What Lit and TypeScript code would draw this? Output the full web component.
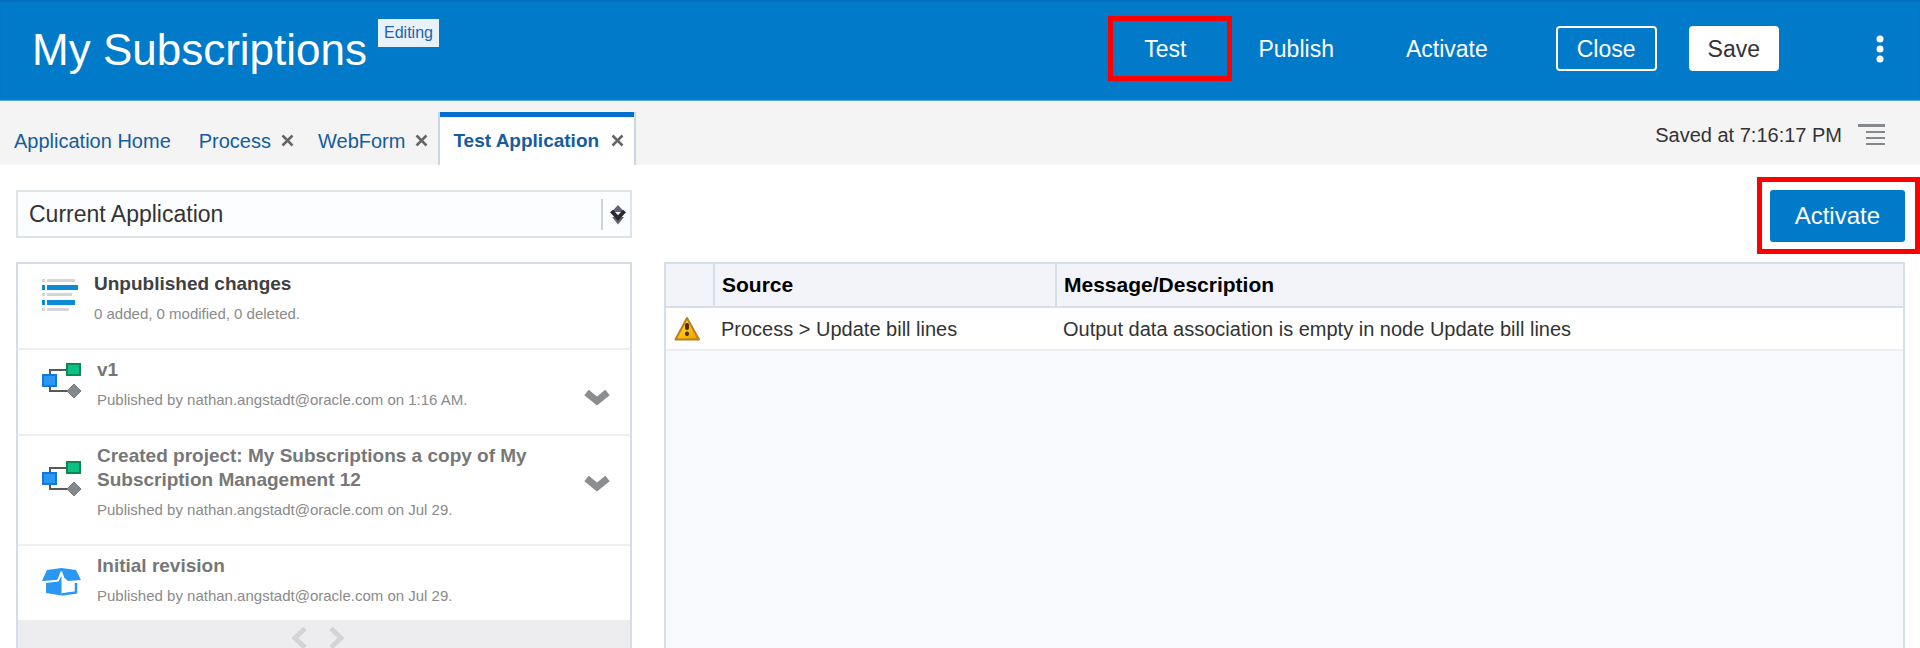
import { LitElement, html, css, svg } from "lit";
import { customElement, state } from "lit/decorators.js";

type Kind = "changes" | "process" | "box";

interface Revision {
  kind: Kind;
  title: string;
  detail: string;
  expandable: boolean;
}

interface Tab {
  label: string;
  closable: boolean;
}

const REVISIONS: Revision[] = [
  { kind: "changes", title: "Unpublished changes", detail: "0 added, 0 modified, 0 deleted.", expandable: false },
  { kind: "process", title: "v1", detail: "Published by nathan.angstadt@oracle.com on 1:16 AM.", expandable: true },
  {
    kind: "process",
    title: "Created project: My Subscriptions a copy of My Subscription Management 12",
    detail: "Published by nathan.angstadt@oracle.com on Jul 29.",
    expandable: true,
  },
  { kind: "box", title: "Initial revision", detail: "Published by nathan.angstadt@oracle.com on Jul 29.", expandable: false },
];

const TABS: Tab[] = [
  { label: "Application Home", closable: false },
  { label: "Process", closable: true },
  { label: "WebForm", closable: true },
  { label: "Test Application", closable: true },
];

const ISSUES = [
  { source: "Process > Update bill lines", message: "Output data association is empty in node Update bill lines" },
];

const shapes = {
  changes: svg`
    <g fill="#d3d5d6"><path d="M0 1h3v3H0zM5 1h28v3H5zM0 15h3v3H0zM5 15h25v3H5zM0 30h3v3H0zM5 30h22v3H5z"/></g>
    <g fill="#0a8bd8"><path d="M0 7h3v5H0zM5 7h31v5H5zM0 22h3v5H0zM5 22h28v5H5z"/></g>`,
  process: svg`
    <path d="M8 14V8H26M8 22V29H28" fill="none" stroke="#58595b" stroke-width="2"/>
    <rect x="25" y="2" width="13" height="11" fill="#0cc184" stroke="#0b8a54" stroke-width="2"/>
    <rect x="1" y="13" width="13" height="11" fill="#2997f3" stroke="#1377dd" stroke-width="2"/>
    <path d="M32 22L39 29L32 36L25 29Z" fill="#84898d" stroke="#74797d" stroke-width="1"/>`,
  box: svg`
    <path d="M5 4L19.500 2L34 4L39 14L26 15L22.500 12L20 5.500H18.500L16 12.500L14.500 14L0 15Z" fill="#2997f3"/>
    <path d="M4 17L16.500 15.500L19.500 10V29.500L4 27Z" fill="#2997f3"/>
    <path d="M34 17V26.500L19.500 28.500" fill="none" stroke="#2997f3" stroke-width="2.500"/>`,
};

@customElement("app-root")
export class AppRoot extends LitElement {
  @state() private activeTab = 3;

  static styles = css`
    :host {
      display: flex;
      flex-direction: column;
      height: 100vh;
      overflow: hidden;
      background: #fff;
      color: #333;
      font: 20px/24px "Liberation Sans", Arial, sans-serif;
    }
    * { box-sizing: border-box; }
    button, select { font: inherit; color: inherit; margin: 0; }
    button { padding: 0; border: 0; background: none; cursor: pointer; }
    h1, h2, p, ul { margin: 0; padding: 0; font-weight: normal; }
    ul { list-style: none; }
    svg { display: block; flex: none; }

    .header {
      display: flex;
      align-items: flex-start;
      justify-content: space-between;
      min-height: 101px;
      padding: 0 32px;
      background: #007ac9;
      border-bottom: 1px solid #5aa7dc;
      box-shadow: inset 0 2px 2px -1px #006bb3;
      color: #fff;
    }
    .brand { display: flex; align-items: flex-start; gap: 11px; }
    .title { font-size: 44px; line-height: 52px; padding-top: 24px; }
    .badge {
      margin-top: 19px;
      padding: 0 6px;
      background: #e9f1fb;
      color: #1c62b0;
      font-size: 16px;
      line-height: 28px;
    }
    .actions { display: flex; align-items: center; padding-top: 26px; font-size: 23px; }
    .action { position: relative; height: 45px; padding: 0 36px; }
    .callout {
      position: absolute;
      inset: -10px -10px -10px 0;
      border: 5px solid #f00;
      pointer-events: none;
    }
    .close, .save { height: 45px; border: 2px solid #fff; border-radius: 4px; }
    .close { margin: 0 32px; padding: 0 19px; }
    .save { padding: 0 17px; background: #fff; color: #333; }
    .more { margin-left: 93px; }

    .tabbar {
      display: flex;
      align-items: flex-end;
      justify-content: space-between;
      height: 64px;
      padding-right: 35px;
      background: #f4f4f4;
    }
    .tabs { display: flex; align-items: flex-end; }
    .tab { display: flex; align-items: center; gap: 10px; height: 53px; padding: 4px 14px 0; color: #145c9e; }
    .tab.closable { padding-right: 10px; }
    .tab a { color: inherit; text-decoration: none; }
    .tab.active {
      gap: 12px;
      padding-left: 13px;
      background: #fff;
      border: solid #ccd5e2;
      border-width: 0 2px;
      box-shadow: inset 0 5px #006fd0;
      font-size: 19px;
      font-weight: bold;
    }
    .status { display: flex; align-items: center; gap: 16px; padding-bottom: 18px; }

    .main {
      flex: 1;
      display: grid;
      grid-template-columns: 616px minmax(0, 1fr);
      grid-template-rows: 50px minmax(0, 1fr);
      gap: 22px 32px;
      min-height: 0;
      padding: 25px 15px 0 16px;
    }
    .picker { position: relative; height: 48px; }
    .picker select {
      appearance: none;
      width: 100%;
      height: 48px;
      padding: 0 48px 0 11px;
      border: 2px solid #dfe4e8;
      border-radius: 0;
      background: #fcfdff;
      font-size: 23px;
    }
    .picker svg { position: absolute; right: 5px; top: 9px; pointer-events: none; }
    .toolbar { display: flex; justify-content: flex-end; }
    .primary {
      position: relative;
      height: 52px;
      padding: 0 25px;
      border-radius: 3px;
      background: #007ac9;
      color: #fff;
      font-size: 24px;
    }
    .primary .callout { inset: -13px -15px -12px -13px; }

    .history {
      display: flex;
      flex-direction: column;
      border: 2px solid #d6dce9;
      border-bottom: 0;
    }
    .revision {
      display: flex;
      gap: 15px;
      padding: 8px 20px 24px 24px;
      border-bottom: 2px solid #efefef;
      color: #777;
    }
    .revision > svg { margin-top: 4px; }
    .revision.changes { gap: 12px; color: #404042; }
    .revision.changes > svg { margin-top: 6px; }
    .revision.tall > svg { margin-top: 16px; }
    .revision.box > svg { margin-top: 12px; }
    .revision:last-child { padding-bottom: 14px; border-bottom: 0; }
    .text { flex: 1; padding-right: 32px; }
    .text h2 { font-size: 19px; line-height: 24px; font-weight: bold; }
    .text p { margin-top: 8px; font-size: 15px; line-height: 20px; color: #8a8a8a; }
    .expand { align-self: flex-start; margin-top: 31px; }
    .pager {
      flex: 1;
      display: flex;
      justify-content: center;
      align-items: flex-start;
      gap: 22px;
      padding: 7px 12px 0 0;
      background: #ededf0;
    }

    .issues { border: 2px solid #d6dfe7; border-bottom: 0; background: #f7f9fd; }
    table { width: 100%; border-collapse: collapse; table-layout: fixed; }
    th, td { text-align: left; padding: 0 7px; }
    th {
      height: 43px;
      background: #f2f4f9;
      border-bottom: 2px solid #d6dfe7;
      color: #000;
      font-size: 21px;
    }
    th + th { border-left: 2px solid #d6dfe7; }
    td { height: 43px; background: #fff; border-bottom: 2px solid #ebeef2; }
    .sign { width: 48px; }
    .source { width: 342px; }
  `;

  private closeIcon() {
    return html`<svg width="13" height="13" viewBox="0 0 13 13" aria-hidden="true">
      <path d="M1.500 1.500L11.500 11.500M11.500 1.500L1.500 11.500" stroke="#666" stroke-width="2.500" />
    </svg>`;
  }

  private renderTab(tab: Tab, index: number) {
    return html`<div class="tab ${tab.closable ? "closable" : ""} ${index === this.activeTab ? "active" : ""}">
      <a href="#" @click=${(e: Event) => { e.preventDefault(); this.activeTab = index; }}>${tab.label}</a>
      ${tab.closable ? html`<button aria-label="Close ${tab.label}">${this.closeIcon()}</button>` : ""}
    </div>`;
  }

  private renderRevision(item: Revision) {
    const tall = item.title.length > 40 ? "tall" : "";
    return html`<li class="revision ${item.kind} ${tall}">
      <svg width="40" height="38" viewBox="0 0 40 38" aria-hidden="true">${shapes[item.kind]}</svg>
      <div class="text">
        <h2>${item.title}</h2>
        <p>${item.detail}</p>
      </div>
      ${item.expandable
        ? html`<button class="expand" aria-label="Show details">
            <svg width="26" height="17" viewBox="0 0 26 17"><path d="M2.500 3.500L13 12L23.500 3.500" fill="none" stroke="#8a8e91" stroke-width="7" /></svg>
          </button>`
        : ""}
    </li>`;
  }

  render() {
    return html`
      <header class="header">
        <div class="brand">
          <h1 class="title">My Subscriptions</h1>
          <span class="badge">Editing</span>
        </div>
        <nav class="actions">
          <button class="action">Test<span class="callout"></span></button>
          <button class="action">Publish</button>
          <button class="action">Activate</button>
          <button class="close">Close</button>
          <button class="save">Save</button>
          <button class="more" aria-label="More actions">
            <svg width="16" height="28" viewBox="0 0 16 28" fill="#fff"><circle cx="8" cy="4" r="3.500" /><circle cx="8" cy="14" r="3.500" /><circle cx="8" cy="24" r="3.500" /></svg>
          </button>
        </nav>
      </header>

      <div class="tabbar">
        <div class="tabs">${TABS.map((tab, i) => this.renderTab(tab, i))}</div>
        <div class="status">
          <span>Saved at 7:16:17 PM</span>
          <button aria-label="Show panel">
            <svg width="27" height="24" viewBox="0 0 27 24" fill="#85898c"><path d="M0 1h27v3H0zM8 8h19v2H8zM8 14h19v2H8zM8 20h19v2H8z" /></svg>
          </button>
        </div>
      </div>

      <main class="main">
        <div class="picker">
          <select aria-label="Application version"><option>Current Application</option></select>
          <svg width="26" height="31" viewBox="0 0 26 31" aria-hidden="true">
            <path d="M1 0V31" stroke="#ccd3db" stroke-width="2" />
            <path d="M17 6L23.500 13H10.500ZM17 25.500L11 18H23Z" fill="#62627a" />
            <path d="M10.500 12L17 19L23.500 12" fill="none" stroke="#2c2c2e" stroke-width="4" />
          </svg>
        </div>
        <div class="toolbar"><button class="primary">Activate<span class="callout"></span></button></div>

        <section class="history">
          <ul>${REVISIONS.map((item) => this.renderRevision(item))}</ul>
          <div class="pager">
            <button aria-label="Previous page"><svg width="16" height="22" viewBox="0 0 16 22"><path d="M14 1.500L4 11L14 20.500" fill="none" stroke="#d2d4d6" stroke-width="5" /></svg></button>
            <button aria-label="Next page"><svg width="16" height="22" viewBox="0 0 16 22"><path d="M2 1.500L12 11L2 20.500" fill="none" stroke="#d2d4d6" stroke-width="5" /></svg></button>
          </div>
        </section>

        <section class="issues">
          <table>
            <thead>
              <tr><th class="sign" scope="col" aria-label="Severity"></th><th class="source" scope="col">Source</th><th scope="col">Message/Description</th></tr>
            </thead>
            <tbody>
              ${ISSUES.map((issue) => html`<tr>
                <td>
                  <svg width="28" height="26" viewBox="0 0 28 26" role="img" aria-label="Warning">
                    <defs><linearGradient id="amber" x1="0" y1="0" x2="1" y2="1"><stop offset="0" stop-color="#ffe873" /><stop offset=".55" stop-color="#fdbe0f" /><stop offset="1" stop-color="#e39a00" /></linearGradient></defs>
                    <path d="M14 2L26 23.500H2.500Z" fill="url(#amber)" stroke="#bd7d1c" stroke-width="2" stroke-linejoin="round" />
                    <rect x="12" y="7" width="4" height="7" rx="2" fill="#4a2c05" /><rect x="12" y="15.500" width="4" height="4.500" rx="2" fill="#4a2c05" />
                  </svg>
                </td>
                <td>${issue.source}</td>
                <td>${issue.message}</td>
              </tr>`)}
            </tbody>
          </table>
        </section>
      </main>
    `;
  }
}
